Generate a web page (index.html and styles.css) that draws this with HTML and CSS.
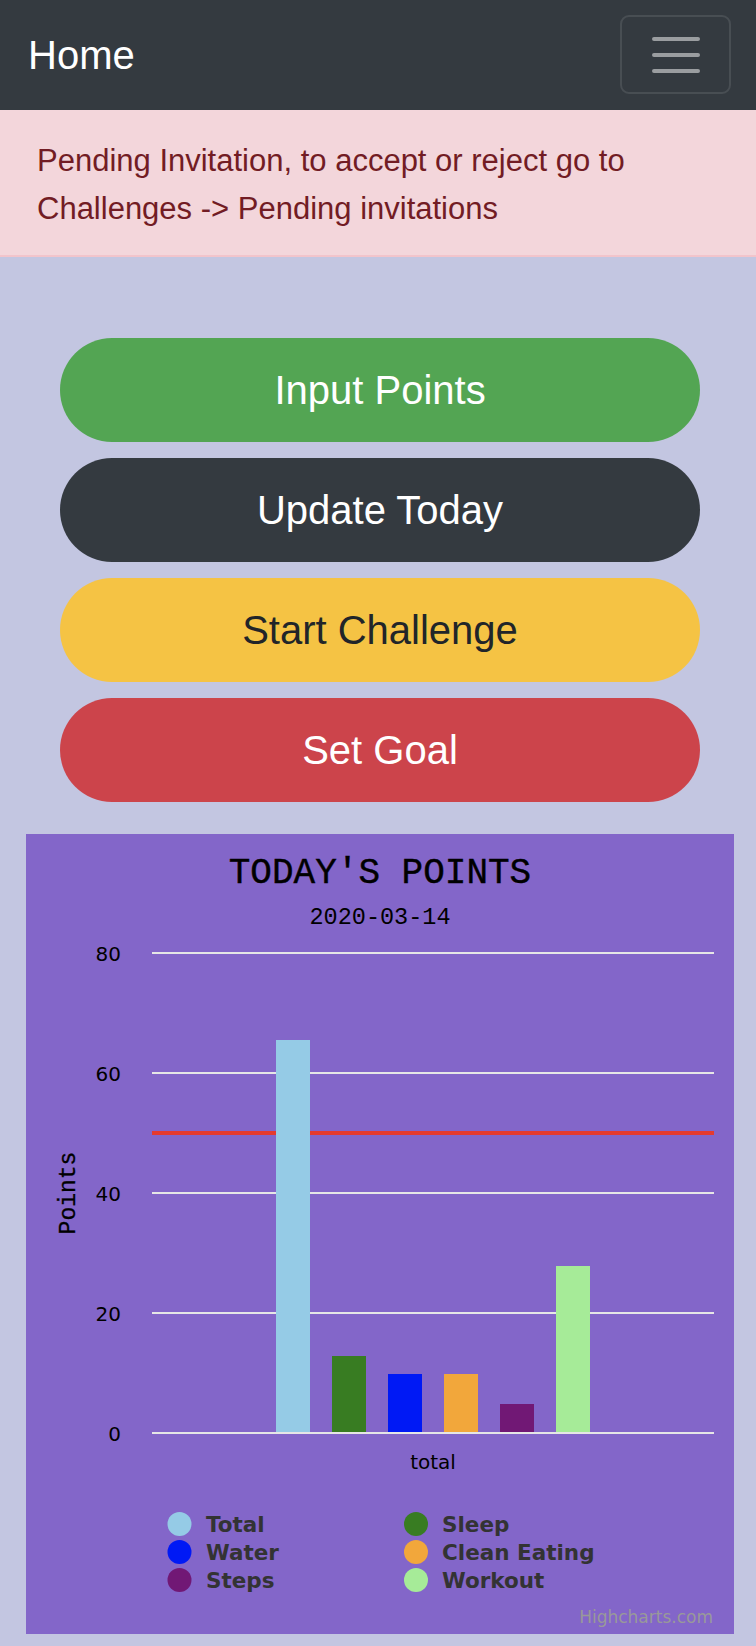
FILE: index.html
```html
<!DOCTYPE html>
<html lang="en">
<head>
<meta charset="utf-8">
<title>Home</title>
<link rel="stylesheet" href="styles.css">
</head>
<body>
<nav class="navbar">
  <a class="brand" href="#">Home</a>
  <button class="toggler" type="button" aria-label="Toggle navigation">
    <svg class="toggler-icon" width="60" height="60" viewBox="0 0 30 30"><path d="M4 7h22M4 15h22M4 23h22" stroke="rgba(255,255,255,0.5)" stroke-width="2" stroke-linecap="round" fill="none"/></svg>
  </button>
</nav>
<div class="alert">Pending Invitation, to accept or reject go to Challenges -&gt; Pending invitations</div>
<main class="actions">
  <a class="btn btn-green" href="#">Input Points</a>
  <a class="btn btn-dark" href="#">Update Today</a>
  <a class="btn btn-yellow" href="#">Start Challenge</a>
  <a class="btn btn-red" href="#">Set Goal</a>
</main>
<section class="chart-wrap">
  <div class="chart">
    <svg width="708" height="800" viewBox="0 0 708 800">
      <text class="c-title" x="354" y="49" text-anchor="middle">TODAY'S POINTS</text>
      <text class="c-sub" x="354" y="90" text-anchor="middle">2020-03-14</text>
      <g class="grid">
        <line x1="126" x2="688" y1="119" y2="119"/>
        <line x1="126" x2="688" y1="239" y2="239"/>
        <line x1="126" x2="688" y1="359" y2="359"/>
        <line x1="126" x2="688" y1="479" y2="479"/>
        <line x1="126" x2="688" y1="599" y2="599"/>
      </g>
      <g class="ylabels">
        <text x="95" y="127" text-anchor="end">80</text>
        <text x="95" y="247" text-anchor="end">60</text>
        <text x="95" y="367" text-anchor="end">40</text>
        <text x="95" y="487" text-anchor="end">20</text>
        <text x="95" y="607" text-anchor="end">0</text>
      </g>
      <text class="c-axis" transform="translate(49,359) rotate(-90)" text-anchor="middle">Points</text>
      <line class="goal" x1="126" x2="688" y1="299" y2="299"/>
      <rect x="250" y="206" width="34" height="392" fill="#95cbe6"/>
      <rect x="306" y="522" width="34" height="76" fill="#387c22"/>
      <rect x="362" y="540" width="34" height="58" fill="#0019f5"/>
      <rect x="418" y="540" width="34" height="58" fill="#f2a73b"/>
      <rect x="474" y="570" width="34" height="28" fill="#711875"/>
      <rect x="530" y="432" width="34" height="166" fill="#a6eb98"/>
      <text class="c-xlabel" x="407" y="635" text-anchor="middle">total</text>
      <g class="legend">
        <circle cx="153.5" cy="690" r="12" fill="#95cbe6"/>
        <text x="180" y="698">Total</text>
        <circle cx="390" cy="690" r="12" fill="#387c22"/>
        <text x="416" y="698">Sleep</text>
        <circle cx="153.5" cy="718" r="12" fill="#0019f5"/>
        <text x="180" y="726">Water</text>
        <circle cx="390" cy="718" r="12" fill="#f2a73b"/>
        <text x="416" y="726">Clean Eating</text>
        <circle cx="153.5" cy="746" r="12" fill="#711875"/>
        <text x="180" y="754">Steps</text>
        <circle cx="390" cy="746" r="12" fill="#a6eb98"/>
        <text x="416" y="754">Workout</text>
      </g>
      <text class="c-credits" x="687" y="789" text-anchor="end">Highcharts.com</text>
    </svg>
  </div>
</section>
</body>
</html>
```
FILE: styles.css
```css
* {
  box-sizing: border-box;
}

body {
  margin: 0;
  background: #c3c6e1;
  font-family: "Liberation Sans", Arial, sans-serif;
}

.navbar {
  height: 110px;
  background: #343a40;
  display: flex;
  align-items: center;
  justify-content: space-between;
  padding: 0 25px 0 28px;
}

.brand {
  color: #ffffff;
  font-size: 40px;
  text-decoration: none;
  line-height: 1;
}

.toggler {
  width: 111px;
  height: 79px;
  margin-top: -1px;
  background: transparent;
  border: 2px solid rgba(255, 255, 255, 0.1);
  border-radius: 9px;
  display: flex;
  align-items: center;
  justify-content: center;
  padding: 0;
}

.toggler-icon {
  display: block;
}

.alert {
  background: #f3d6db;
  color: #721c24;
  font-size: 31px;
  line-height: 48px;
  padding: 27px 36px 22px 37px;
  border-bottom: 2px solid #f2c4cb;
}

.actions {
  display: flex;
  flex-direction: column;
  gap: 16px;
  padding: 81px 56px 0 60px;
}

.btn {
  height: 104px;
  border-radius: 52px;
  display: flex;
  align-items: center;
  justify-content: center;
  font-size: 40px;
  text-decoration: none;
  color: #ffffff;
}

.btn-green {
  background: #53a553;
}

.btn-dark {
  background: #343a40;
}

.btn-yellow {
  background: #f5c344;
  color: #212529;
}

.btn-red {
  background: #cc444b;
}

.chart-wrap {
  padding: 32px 22px 12px 26px;
}

.chart {
  width: 708px;
  height: 800px;
  background: #8366c9;
}

.chart svg {
  display: block;
}

.c-title {
  font-family: "Liberation Mono", "Courier New", monospace;
  font-size: 36px;
  fill: #000000;
  stroke: #000000;
  stroke-width: 0.4;
}

.c-sub {
  font-family: "Liberation Mono", "Courier New", monospace;
  font-size: 23.5px;
  fill: #000000;
}

.c-axis {
  font-family: "Liberation Mono", "Courier New", monospace;
  font-size: 23px;
  fill: #000000;
  stroke: #000000;
  stroke-width: 0.3;
}

.grid line {
  stroke: #e6e6e6;
  stroke-width: 2;
}

.goal {
  stroke: #e53a2e;
  stroke-width: 4;
}

.ylabels text,
.c-xlabel {
  font-family: "DejaVu Sans", sans-serif;
  font-size: 20px;
  fill: #000000;
}

.legend text {
  font-family: "DejaVu Sans", sans-serif;
  font-weight: bold;
  font-size: 21.5px;
  fill: #333333;
}

.c-credits {
  font-family: "DejaVu Sans", sans-serif;
  font-size: 17px;
  fill: #999999;
}
```
